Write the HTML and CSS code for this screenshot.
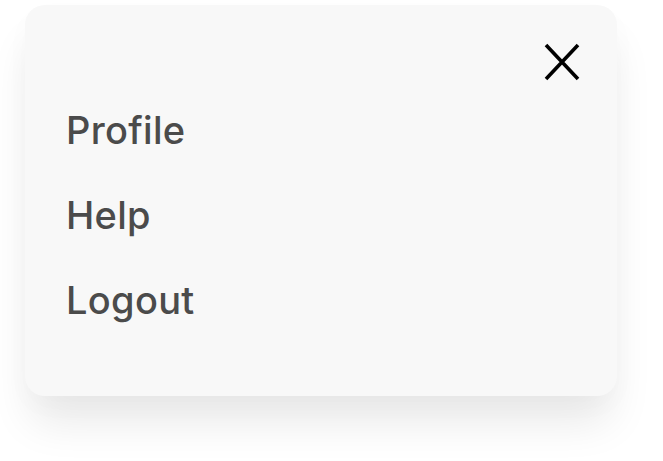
FILE: index.html
```html
<!DOCTYPE html>
<html lang="en">
<head>
  <meta charset="UTF-8">
  <meta name="viewport" content="width=device-width, initial-scale=1.0">
  <title>Menu</title>
  <link rel="stylesheet" href="styles.css">
</head>
<body>

<!-- Menu desplegable -->
<div class="menu-card">
  <div class="menu-header">
    <button class="close-btn" aria-label="Close">
      <svg width="36" height="38" viewBox="0 0 36 38">
        <path d="M2 2 L34 36 M34 2 L2 36" stroke="#000" stroke-width="3.6" fill="none"/>
      </svg>
    </button>
  </div>

  <ul class="menu-list">
    <li><a href="#">Profile</a></li>
    <li><a href="#">Help</a></li>
    <li><a href="#">Logout</a></li>
  </ul>
</div>

</body>
</html>
```
FILE: styles.css
```css
html, body {
  margin: 0;
  height: 100%;
}

body {
  background-color: #fff;
  font-family: Inter, "Open Sans", sans-serif;
}

.menu-card {
  margin: 5px 0 0 25px;
  width: 592px;
  height: 391px;
  box-sizing: border-box;
  padding: 38px 37px 0 41px;
  background-color: #f8f8f8;
  border-radius: 20px;
  box-shadow: 0 32px 44px -6px rgba(0, 0, 0, 0.09), 0 10px 30px rgba(0, 0, 0, 0.02);
}

.menu-header {
  display: flex;
  justify-content: flex-end;
}

.close-btn {
  padding: 0;
  border: none;
  background: none;
  display: block;
  line-height: 0;
}

.menu-list {
  list-style: none;
  margin: 7px 0 0;
  padding: 0;
}

.menu-list li {
  font-size: 38px;
  line-height: 85px;
}

.menu-list a {
  font-weight: 500;
  color: #4b4b4b;
  text-decoration: none;
  letter-spacing: 0.3px;
}
```
